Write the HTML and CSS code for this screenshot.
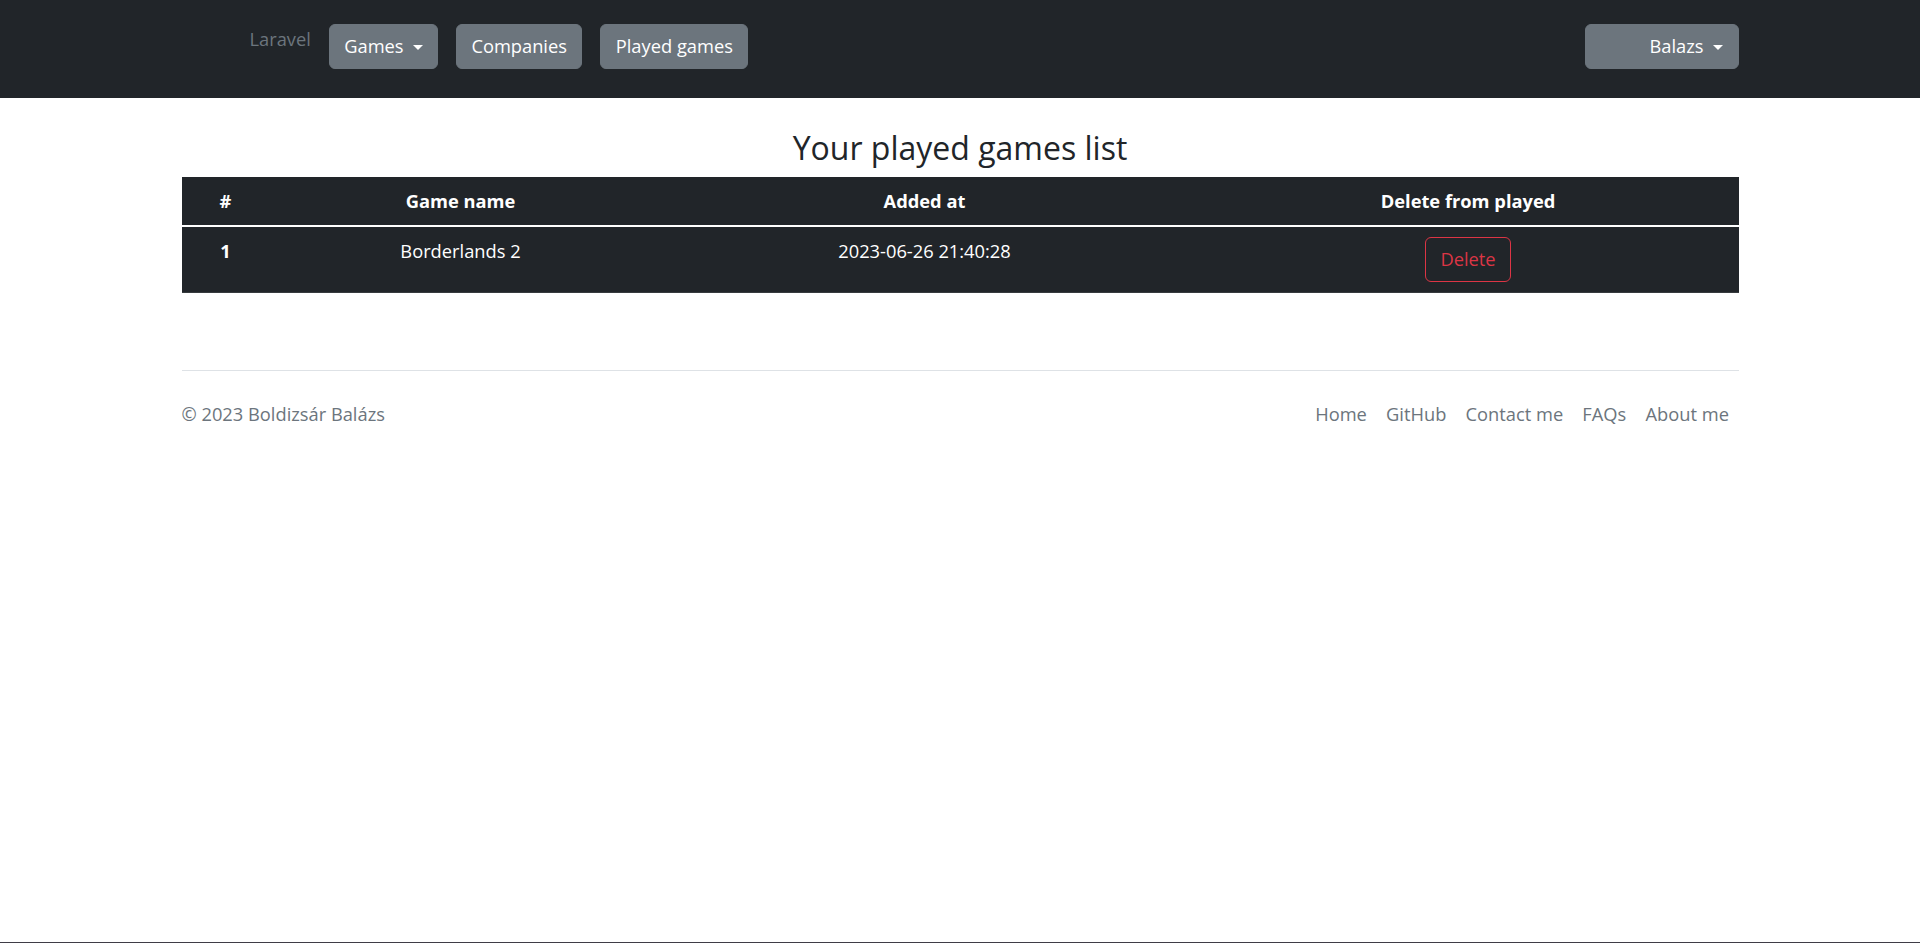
FILE: index.html
```html
<!DOCTYPE html>
<html lang="en">
<head>
<meta charset="utf-8">
<title>Played games</title>
<link rel="stylesheet" href="styles.css">
</head>
<body>
<header class="navbar">
  <div class="nav-inner">
    <span class="brand">Laravel</span>
    <div class="nav-buttons">
      <button class="btn btn-secondary">Games<span class="caret"></span></button>
      <button class="btn btn-secondary">Companies</button>
      <button class="btn btn-secondary">Played games</button>
    </div>
    <button class="btn btn-secondary user-btn"><span class="avatar"></span>Balazs<span class="caret"></span></button>
  </div>
</header>

<main class="container">
  <h3 class="title">Your played games list</h3>
  <table class="games-table">
    <colgroup>
      <col class="c1"><col class="c2"><col class="c3"><col class="c4">
    </colgroup>
    <thead>
      <tr>
        <th>#</th>
        <th>Game name</th>
        <th>Added at</th>
        <th>Delete from played</th>
      </tr>
    </thead>
    <tbody>
      <tr>
        <th>1</th>
        <td>Borderlands 2</td>
        <td>2023-06-26 21:40:28</td>
        <td><button class="btn btn-outline-danger">Delete</button></td>
      </tr>
    </tbody>
  </table>
</main>

<footer class="container footer">
  <span class="copy">© 2023 Boldizsár Balázs</span>
  <nav class="footer-nav">
    <a href="#" class="footer-link">Home</a>
    <a href="#" class="footer-link">GitHub</a>
    <a href="#" class="footer-link">Contact me</a>
    <a href="#" class="footer-link">FAQs</a>
    <a href="#" class="footer-link">About me</a>
  </nav>
</footer>
<div class="frame-edge"></div>
</body>
</html>
```

FILE: styles.css
```css
* { box-sizing: border-box; }

html, body {
  margin: 0;
  padding: 0;
}

body {
  font-family: "Open Sans", "Noto Sans", sans-serif;
  font-size: 18.3px;
  line-height: 28.8px;
  color: #212529;
  background: #fff;
}

.navbar {
  background: #212529;
  height: 98px;
}

.nav-inner {
  width: 1557px;
  margin: 0 auto;
  padding: 24px 0 0 68px;
  display: flex;
  align-items: flex-start;
}

.brand {
  color: #6c757d;
  margin-right: 18px;
  margin-top: 1px;
}

.nav-buttons {
  display: flex;
  gap: 18px;
  flex: 1;
}

.btn {
  font-family: inherit;
  font-size: 18.3px;
  line-height: 28.8px;
  padding: 7.2px 14.4px;
  border: 1.2px solid transparent;
  border-radius: 6px;
  cursor: pointer;
  display: inline-flex;
  align-items: center;
}

.btn-secondary {
  background: #6c757d;
  border-color: #6c757d;
  color: #fff;
}

.caret {
  display: inline-block;
  width: 0;
  height: 0;
  margin-left: 9px;
  margin-top: 2px;
  border-top: 5.8px solid #fff;
  border-left: 5.8px solid transparent;
  border-right: 5.8px solid transparent;
}

.user-btn {
  padding-right: 15px;
}

.avatar {
  display: inline-block;
  width: 49px;
  height: 1px;
}

.container {
  width: 1557px;
  margin: 0 auto;
}

.title {
  font-size: 32px;
  font-weight: 400;
  line-height: 38.4px;
  text-align: center;
  margin: 31px 0 10px;
}

.games-table {
  width: 1557px;
  border-collapse: collapse;
  background: #212529;
  color: #fff;
}

.c1 { width: 88px; }
.c2 { width: 382px; }
.c3 { width: 546px; }
.c4 { width: 541px; }

.games-table th,
.games-table td {
  padding: 9.6px;
  text-align: center;
  vertical-align: top;
}

.games-table thead th {
  font-weight: 700;
}

.games-table tbody tr {
  border-top: 2.6px solid #fff;
  border-bottom: 1.2px solid #373b3e;
}

.games-table tbody th {
  font-weight: 700;
}

.btn-outline-danger {
  background: transparent;
  border-color: #dc3545;
  color: #dc3545;
}

.footer {
  margin-top: 77px;
  border-top: 1.2px solid #dee2e6;
  padding: 19.2px 0;
  display: flex;
  justify-content: space-between;
  align-items: center;
}

.copy {
  color: #6c757d;
}

.footer-nav {
  display: flex;
}

.footer-link {
  color: #6c757d;
  text-decoration: none;
  padding: 9.6px 9.6px;
}

.frame-edge {
  position: fixed;
  left: 0;
  right: 0;
  bottom: 0;
  height: 1px;
  background: #3f3d46;
}
```
